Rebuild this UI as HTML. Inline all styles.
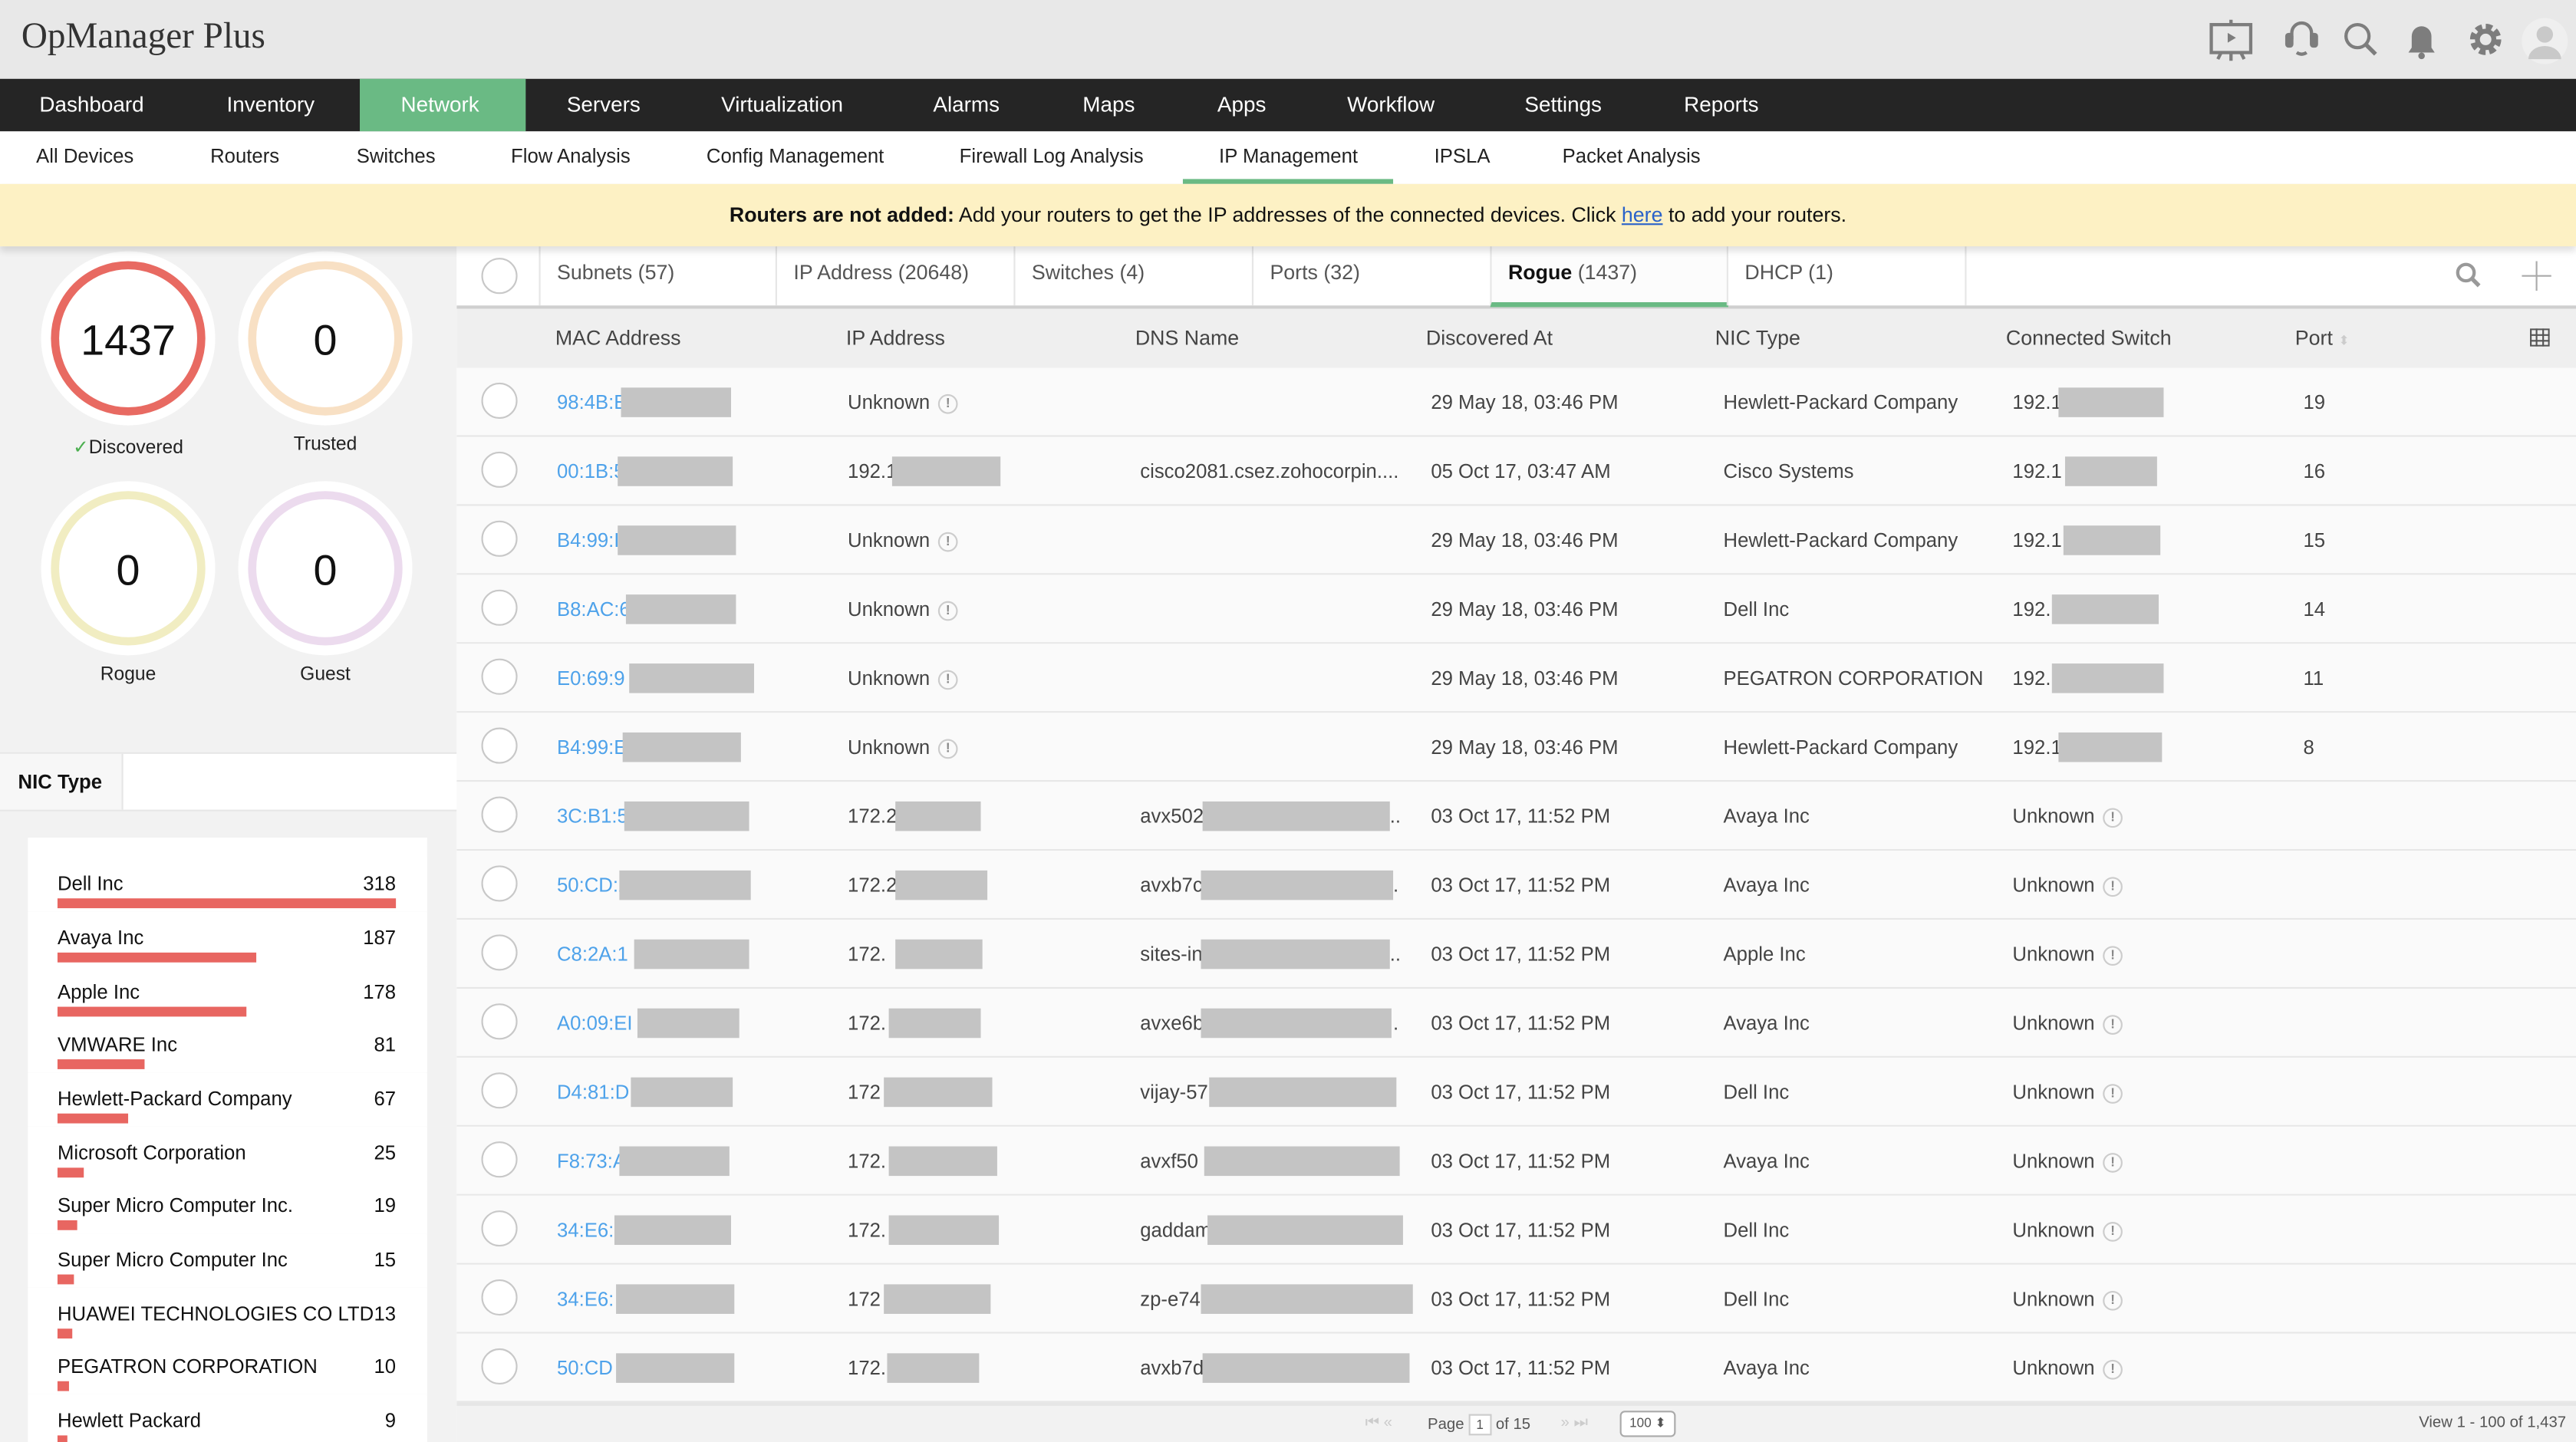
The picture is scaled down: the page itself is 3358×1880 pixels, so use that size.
<!DOCTYPE html>
<html><head><meta charset="utf-8">
<style>
html,body{margin:0;padding:0;width:3358px;height:1880px;overflow:hidden;background:#fff}
#w{position:absolute;left:0;top:0;width:1568px;height:878px;transform:scale(2.14158,2.1412);transform-origin:0 0;font-family:"Liberation Sans",sans-serif;color:#333;overflow:hidden}
.a{position:absolute;white-space:nowrap}
.hdr{left:0;top:0;width:1568px;height:48px;background:#e8e8e8}
.nav{left:0;top:48px;width:1568px;height:32px;background:#252525}
.nav span{position:absolute;top:8px;color:#fff;font-size:13px}
.sub{left:0;top:80px;width:1568px;height:32px;background:#fff}
.sub span{position:absolute;top:8px;color:#222;font-size:12px}
.ban{left:0;top:112px;width:1568px;height:38px;background:#fdf1c4;box-shadow:0 3px 4px rgba(0,0,0,.12);z-index:2}
.lp{left:0;top:150px;width:278px;height:728px;background:#f2f2f2}
.circ{position:absolute;border-radius:50%;background:#fff;box-shadow:0 0 0 6px #fff}
.circ b{position:absolute;left:0;right:0;top:28px;text-align:center;font-weight:normal;font-size:26px;color:#111}
.lbl{position:absolute;font-size:11.5px;color:#222;text-align:center;width:120px}
.nic{position:absolute;left:17px;width:243px;height:33px;border-bottom:1px solid #e6e6e6;background:#fff}
.nic .n{position:absolute;left:18px;top:9px;font-size:12px;color:#111}
.nic .v{position:absolute;right:19px;top:9px;font-size:12px;color:#111}
.nic .bar{position:absolute;left:18px;top:25px;height:6px;background:#e86661}
.rp{left:278px;top:150px;width:1290px;height:728px;background:#fafafa}
.tabs{position:absolute;left:0;top:0;width:1290px;height:36px;background:#fff;border-bottom:2px solid #cfcfcf}
.tab{position:absolute;top:0;height:36px;border-left:1px solid #e6e6e6;font-size:12.5px;color:#555}
.tab span{position:absolute;left:10px;top:9px}
.th{position:absolute;left:0;top:38px;width:1290px;height:36px;background:#efefef}
.th span{position:absolute;top:11px;font-size:12.5px;color:#444}
.row{position:absolute;left:0;width:1290px;height:41px;border-bottom:1px solid #e7e7e7;background:#fafafa;font-size:12px;color:#444}
.row span{position:absolute;top:14px;white-space:nowrap}
.row i{position:absolute;top:12px;height:18px;background:#c4c4c4}
.ck{position:absolute;left:15px;top:9px;width:20px;height:20px;border:1px solid #c8c8c8;border-radius:50%;background:#fff}
.m{color:#4ea2ea}
.ex{display:inline-block;width:10px;height:10px;border:1px solid #ccc;border-radius:50%;font-size:8px;line-height:10px;text-align:center;color:#888;margin-left:5px;vertical-align:1px}
.foot{position:absolute;left:0;top:704px;width:1290px;height:24px;background:#f2f2f2;border-top:2px solid #e6e6e6;font-size:9.5px;color:#555}
</style></head><body><div id="w">

<div class="a hdr"></div>
<div class="a" style="left:13px;top:9px;font-family:'Liberation Serif',serif;font-size:22px;color:#333">OpManager Plus</div>
<svg class="a" style="left:1340px;top:8px" width="224" height="34" viewBox="0 0 224 34">
 <g fill="none" stroke="#7d7d7d" stroke-width="2">
  <rect x="6" y="7" width="24" height="17"/><line x1="18" y1="4" x2="18" y2="7"/><line x1="18" y1="24" x2="18" y2="29"/><line x1="12" y1="24" x2="10" y2="28"/><line x1="24" y1="24" x2="26" y2="28"/>
  <path d="M55 16 v-4 a6 6 0 0 1 12 0 v4"/><path d="M58 24 q3 2 6 0"/>
  <circle cx="95" cy="14" r="7"/><line x1="100" y1="19" x2="106" y2="25" stroke-width="2.5"/>
 </g>
 <path d="M16 12 l5 3 -5 3z" fill="#7d7d7d"/>
 <rect x="51" y="12" width="5" height="9" rx="2" fill="#7d7d7d"/><rect x="66" y="12" width="5" height="9" rx="2" fill="#7d7d7d"/>
 <path d="M126 24 h16 l-2 -3 v-7 a6 6 0 0 0 -12 0 v7z" fill="#7d7d7d"/><circle cx="134" cy="26" r="2" fill="#7d7d7d"/>
 <circle cx="173" cy="16" r="7" fill="none" stroke="#7d7d7d" stroke-width="5" stroke-dasharray="3.5 2"/><circle cx="173" cy="16" r="5" fill="none" stroke="#7d7d7d" stroke-width="3"/>
 <circle cx="209" cy="17" r="14" fill="#efefef"/><circle cx="209" cy="13" r="5" fill="#c9c9c9"/><path d="M199 28 a10 8 0 0 1 20 0z" fill="#c9c9c9"/>
</svg>

<div class="a nav">
 <div style="position:absolute;left:219px;top:0;width:101px;height:32px;background:#6aba84"></div>
 <span style="left:24px">Dashboard</span><span style="left:138px">Inventory</span><span style="left:244px">Network</span><span style="left:345px">Servers</span><span style="left:439px">Virtualization</span><span style="left:568px">Alarms</span><span style="left:659px">Maps</span><span style="left:741px">Apps</span><span style="left:820px">Workflow</span><span style="left:928px">Settings</span><span style="left:1025px">Reports</span>
</div>
<div class="a sub">
 <span style="left:22px">All Devices</span><span style="left:128px">Routers</span><span style="left:217px">Switches</span><span style="left:311px">Flow Analysis</span><span style="left:430px">Config Management</span><span style="left:584px">Firewall Log Analysis</span><span style="left:742px">IP Management</span><span style="left:873px">IPSLA</span><span style="left:951px">Packet Analysis</span>
 <div style="position:absolute;left:720px;top:29px;width:128px;height:3px;background:#6aba84"></div>
</div>
<div class="a ban"><div style="position:absolute;left:0;right:0;top:12px;text-align:center;font-size:12.5px;color:#111"><b>Routers are not added:</b> Add your routers to get the IP addresses of the connected devices. Click <u style="color:#2a62c9">here</u> to add your routers.</div></div>

<div class="a lp">
 <div class="circ" style="left:31px;top:9px;border:5px solid #e86a62;width:84px;height:84px"><b>1437</b></div>
 <div class="circ" style="left:151px;top:9px;border:5px solid #f8e0c4;width:84px;height:84px"><b>0</b></div>
 <div class="circ" style="left:31px;top:149px;border:5px solid #f1edc2;width:84px;height:84px"><b>0</b></div>
 <div class="circ" style="left:151px;top:149px;border:5px solid #ecdbee;width:84px;height:84px"><b>0</b></div>
 <div class="lbl" style="left:18px;top:115px"><span style="color:#4caf50">✓</span>Discovered</div>
 <div class="lbl" style="left:138px;top:115px">Trusted</div>
 <div class="lbl" style="left:18px;top:255px">Rogue</div>
 <div class="lbl" style="left:138px;top:255px">Guest</div>
 <div style="position:absolute;left:0;top:308px;width:278px;height:34px;background:#fff;border-top:1px solid #e6e6e6;border-bottom:1px solid #e6e6e6"></div>
 <div style="position:absolute;left:0;top:309px;width:74px;height:34px;background:#f7f7f7;border-right:1px solid #e6e6e6;font-size:12px;font-weight:bold;color:#111"><span style="position:absolute;left:11px;top:10px">NIC Type</span></div>
 <div style="position:absolute;left:17px;top:360px;width:243px;height:368px;background:#fff"></div>
</div>
<div class="nic" style="top:522px"><span class="n">Dell Inc</span><span class="v">318</span><div class="bar" style="width:206px"></div></div>
<div class="nic" style="top:555px"><span class="n">Avaya Inc</span><span class="v">187</span><div class="bar" style="width:121px"></div></div>
<div class="nic" style="top:588px"><span class="n">Apple Inc</span><span class="v">178</span><div class="bar" style="width:115px"></div></div>
<div class="nic" style="top:620px"><span class="n">VMWARE Inc</span><span class="v">81</span><div class="bar" style="width:53px"></div></div>
<div class="nic" style="top:653px"><span class="n">Hewlett-Packard Company</span><span class="v">67</span><div class="bar" style="width:43px"></div></div>
<div class="nic" style="top:686px"><span class="n">Microsoft Corporation</span><span class="v">25</span><div class="bar" style="width:16px"></div></div>
<div class="nic" style="top:718px"><span class="n">Super Micro Computer Inc.</span><span class="v">19</span><div class="bar" style="width:12px"></div></div>
<div class="nic" style="top:751px"><span class="n">Super Micro Computer Inc</span><span class="v">15</span><div class="bar" style="width:10px"></div></div>
<div class="nic" style="top:784px"><span class="n">HUAWEI TECHNOLOGIES CO LTD</span><span class="v">13</span><div class="bar" style="width:9px"></div></div>
<div class="nic" style="top:816px"><span class="n">PEGATRON CORPORATION</span><span class="v">10</span><div class="bar" style="width:7px"></div></div>
<div class="nic" style="top:849px"><span class="n">Hewlett Packard</span><span class="v">9</span><div class="bar" style="width:6px"></div></div>

<div class="a rp">
 <div class="tabs">
  <div class="ck" style="left:15px;top:7px"></div>
  <div class="tab" style="left:50px;width:144px"><span>Subnets (57)</span></div>
  <div class="tab" style="left:194px;width:145px"><span>IP Address (20648)</span></div>
  <div class="tab" style="left:339px;width:145px"><span>Switches (4)</span></div>
  <div class="tab" style="left:484px;width:145px"><span>Ports (32)</span></div>
  <div class="tab" style="left:629px;width:144px;background:#fcfcfc;border-bottom:3px solid #6aba84;height:34px"><span><b style="color:#111">Rogue</b> (1437)</span></div>
  <div class="tab" style="left:773px;width:145px"><span>DHCP (1)</span></div>
  <div class="tab" style="left:918px;width:1px"></div>
  <svg style="position:absolute;left:1216px;top:9px" width="18" height="18"><circle cx="7" cy="7" r="5" fill="none" stroke="#999" stroke-width="2"/><line x1="11" y1="11" x2="15" y2="15" stroke="#999" stroke-width="2.5"/></svg>
  <svg style="position:absolute;left:1257px;top:9px" width="18" height="18"><line x1="9" y1="0" x2="9" y2="18" stroke="#aaa"/><line x1="0" y1="9" x2="18" y2="9" stroke="#aaa"/></svg>
 </div>
 <div class="th">
  <span style="left:60px">MAC Address</span><span style="left:237px">IP Address</span><span style="left:413px">DNS Name</span><span style="left:590px">Discovered At</span><span style="left:766px">NIC Type</span><span style="left:943px">Connected Switch</span><span style="left:1119px">Port <small style="color:#ccc;font-size:8px">⬍</small></span>
  <svg style="position:absolute;left:1262px;top:12px" width="12" height="11"><rect x="0.5" y="0.5" width="11" height="10" fill="none" stroke="#555"/><path d="M0 4h12M0 7.5h12M4 0v11M8 0v11" stroke="#555"/></svg>
 </div>

 <div class="row" style="top:74px"><div class="ck"></div><span class="m" style="left:61px">98:4B:E</span><i style="left:100px;width:67px"></i><span style="left:238px">Unknown<b class="ex">!</b></span><span style="left:593px">29 May 18, 03:46 PM</span><span style="left:771px">Hewlett-Packard Company</span><span style="left:947px">192.1</span><i style="left:975px;width:64px"></i><span style="left:1124px">19</span></div>
 <div class="row" style="top:116px"><div class="ck"></div><span class="m" style="left:61px">00:1B:5</span><i style="left:98px;width:70px"></i><span style="left:238px">192.1</span><i style="left:265px;width:66px"></i><span style="left:416px">cisco2081.csez.zohocorpin....</span><span style="left:593px">05 Oct 17, 03:47 AM</span><span style="left:771px">Cisco Systems</span><span style="left:947px">192.1</span><i style="left:979px;width:56px"></i><span style="left:1124px">16</span></div>
 <div class="row" style="top:158px"><div class="ck"></div><span class="m" style="left:61px">B4:99:I</span><i style="left:98px;width:72px"></i><span style="left:238px">Unknown<b class="ex">!</b></span><span style="left:593px">29 May 18, 03:46 PM</span><span style="left:771px">Hewlett-Packard Company</span><span style="left:947px">192.1</span><i style="left:978px;width:59px"></i><span style="left:1124px">15</span></div>
 <div class="row" style="top:200px"><div class="ck"></div><span class="m" style="left:61px">B8:AC:6</span><i style="left:103px;width:67px"></i><span style="left:238px">Unknown<b class="ex">!</b></span><span style="left:593px">29 May 18, 03:46 PM</span><span style="left:771px">Dell Inc</span><span style="left:947px">192.1</span><i style="left:971px;width:65px"></i><span style="left:1124px">14</span></div>
 <div class="row" style="top:242px"><div class="ck"></div><span class="m" style="left:61px">E0:69:9</span><i style="left:105px;width:76px"></i><span style="left:238px">Unknown<b class="ex">!</b></span><span style="left:593px">29 May 18, 03:46 PM</span><span style="left:771px">PEGATRON CORPORATION</span><span style="left:947px">192.</span><i style="left:971px;width:68px"></i><span style="left:1124px">11</span></div>
 <div class="row" style="top:284px"><div class="ck"></div><span class="m" style="left:61px">B4:99:E</span><i style="left:101px;width:72px"></i><span style="left:238px">Unknown<b class="ex">!</b></span><span style="left:593px">29 May 18, 03:46 PM</span><span style="left:771px">Hewlett-Packard Company</span><span style="left:947px">192.1</span><i style="left:975px;width:63px"></i><span style="left:1124px">8</span></div>
 <div class="row" style="top:326px"><div class="ck"></div><span class="m" style="left:61px">3C:B1:5</span><i style="left:102px;width:76px"></i><span style="left:238px">172.2</span><i style="left:267px;width:52px"></i><span style="left:416px">avx502</span><i style="left:454px;width:114px"></i><span style="left:568px">..</span><span style="left:593px">03 Oct 17, 11:52 PM</span><span style="left:771px">Avaya Inc</span><span style="left:947px">Unknown<b class="ex">!</b></span></div>
 <div class="row" style="top:368px"><div class="ck"></div><span class="m" style="left:61px">50:CD:2</span><i style="left:99px;width:80px"></i><span style="left:238px">172.2</span><i style="left:267px;width:56px"></i><span style="left:416px">avxb7c</span><i style="left:453px;width:117px"></i><span style="left:570px">.</span><span style="left:593px">03 Oct 17, 11:52 PM</span><span style="left:771px">Avaya Inc</span><span style="left:947px">Unknown<b class="ex">!</b></span></div>
 <div class="row" style="top:410px"><div class="ck"></div><span class="m" style="left:61px">C8:2A:1</span><i style="left:108px;width:70px"></i><span style="left:238px">172.</span><i style="left:267px;width:53px"></i><span style="left:416px">sites-in</span><i style="left:453px;width:115px"></i><span style="left:568px">..</span><span style="left:593px">03 Oct 17, 11:52 PM</span><span style="left:771px">Apple Inc</span><span style="left:947px">Unknown<b class="ex">!</b></span></div>
 <div class="row" style="top:452px"><div class="ck"></div><span class="m" style="left:61px">A0:09:EI</span><i style="left:110px;width:62px"></i><span style="left:238px">172.</span><i style="left:263px;width:56px"></i><span style="left:416px">avxe6b</span><i style="left:453px;width:116px"></i><span style="left:570px">.</span><span style="left:593px">03 Oct 17, 11:52 PM</span><span style="left:771px">Avaya Inc</span><span style="left:947px">Unknown<b class="ex">!</b></span></div>
 <div class="row" style="top:494px"><div class="ck"></div><span class="m" style="left:61px">D4:81:D</span><i style="left:106px;width:62px"></i><span style="left:238px">172</span><i style="left:260px;width:66px"></i><span style="left:416px">vijay-57</span><i style="left:458px;width:114px"></i><span style="left:593px">03 Oct 17, 11:52 PM</span><span style="left:771px">Dell Inc</span><span style="left:947px">Unknown<b class="ex">!</b></span></div>
 <div class="row" style="top:536px"><div class="ck"></div><span class="m" style="left:61px">F8:73:A</span><i style="left:99px;width:67px"></i><span style="left:238px">172.</span><i style="left:263px;width:66px"></i><span style="left:416px">avxf50</span><i style="left:455px;width:119px"></i><span style="left:593px">03 Oct 17, 11:52 PM</span><span style="left:771px">Avaya Inc</span><span style="left:947px">Unknown<b class="ex">!</b></span></div>
 <div class="row" style="top:578px"><div class="ck"></div><span class="m" style="left:61px">34:E6:</span><i style="left:96px;width:71px"></i><span style="left:238px">172.</span><i style="left:263px;width:67px"></i><span style="left:416px">gaddam</span><i style="left:457px;width:119px"></i><span style="left:593px">03 Oct 17, 11:52 PM</span><span style="left:771px">Dell Inc</span><span style="left:947px">Unknown<b class="ex">!</b></span></div>
 <div class="row" style="top:620px"><div class="ck"></div><span class="m" style="left:61px">34:E6:</span><i style="left:97px;width:72px"></i><span style="left:238px">172</span><i style="left:260px;width:65px"></i><span style="left:416px">zp-e74</span><i style="left:453px;width:129px"></i><span style="left:593px">03 Oct 17, 11:52 PM</span><span style="left:771px">Dell Inc</span><span style="left:947px">Unknown<b class="ex">!</b></span></div>
 <div class="row" style="top:662px"><div class="ck"></div><span class="m" style="left:61px">50:CD</span><i style="left:97px;width:72px"></i><span style="left:238px">172.</span><i style="left:262px;width:56px"></i><span style="left:416px">avxb7d</span><i style="left:454px;width:126px"></i><span style="left:593px">03 Oct 17, 11:52 PM</span><span style="left:771px">Avaya Inc</span><span style="left:947px">Unknown<b class="ex">!</b></span></div>

 <div class="foot">
  <span style="position:absolute;left:553px;top:5px;color:#ccc">⏮ «</span>
  <span style="position:absolute;left:591px;top:5px">Page <span style="display:inline-block;width:12px;height:11px;border:1px solid #ccc;background:#fff;font-size:8px;line-height:11px;text-align:center">1</span> of 15</span>
  <span style="position:absolute;left:672px;top:5px;color:#ccc">» ⏭</span>
  <span style="position:absolute;left:708px;top:3px;width:32px;height:14px;border:1px solid #aaa;border-radius:3px;background:#fff;font-size:8px;line-height:14px;text-align:center">100 ⬍</span>
  <span style="position:absolute;right:6px;top:5px">View 1 - 100 of 1,437</span>
 </div>
</div>
</div></body></html>
